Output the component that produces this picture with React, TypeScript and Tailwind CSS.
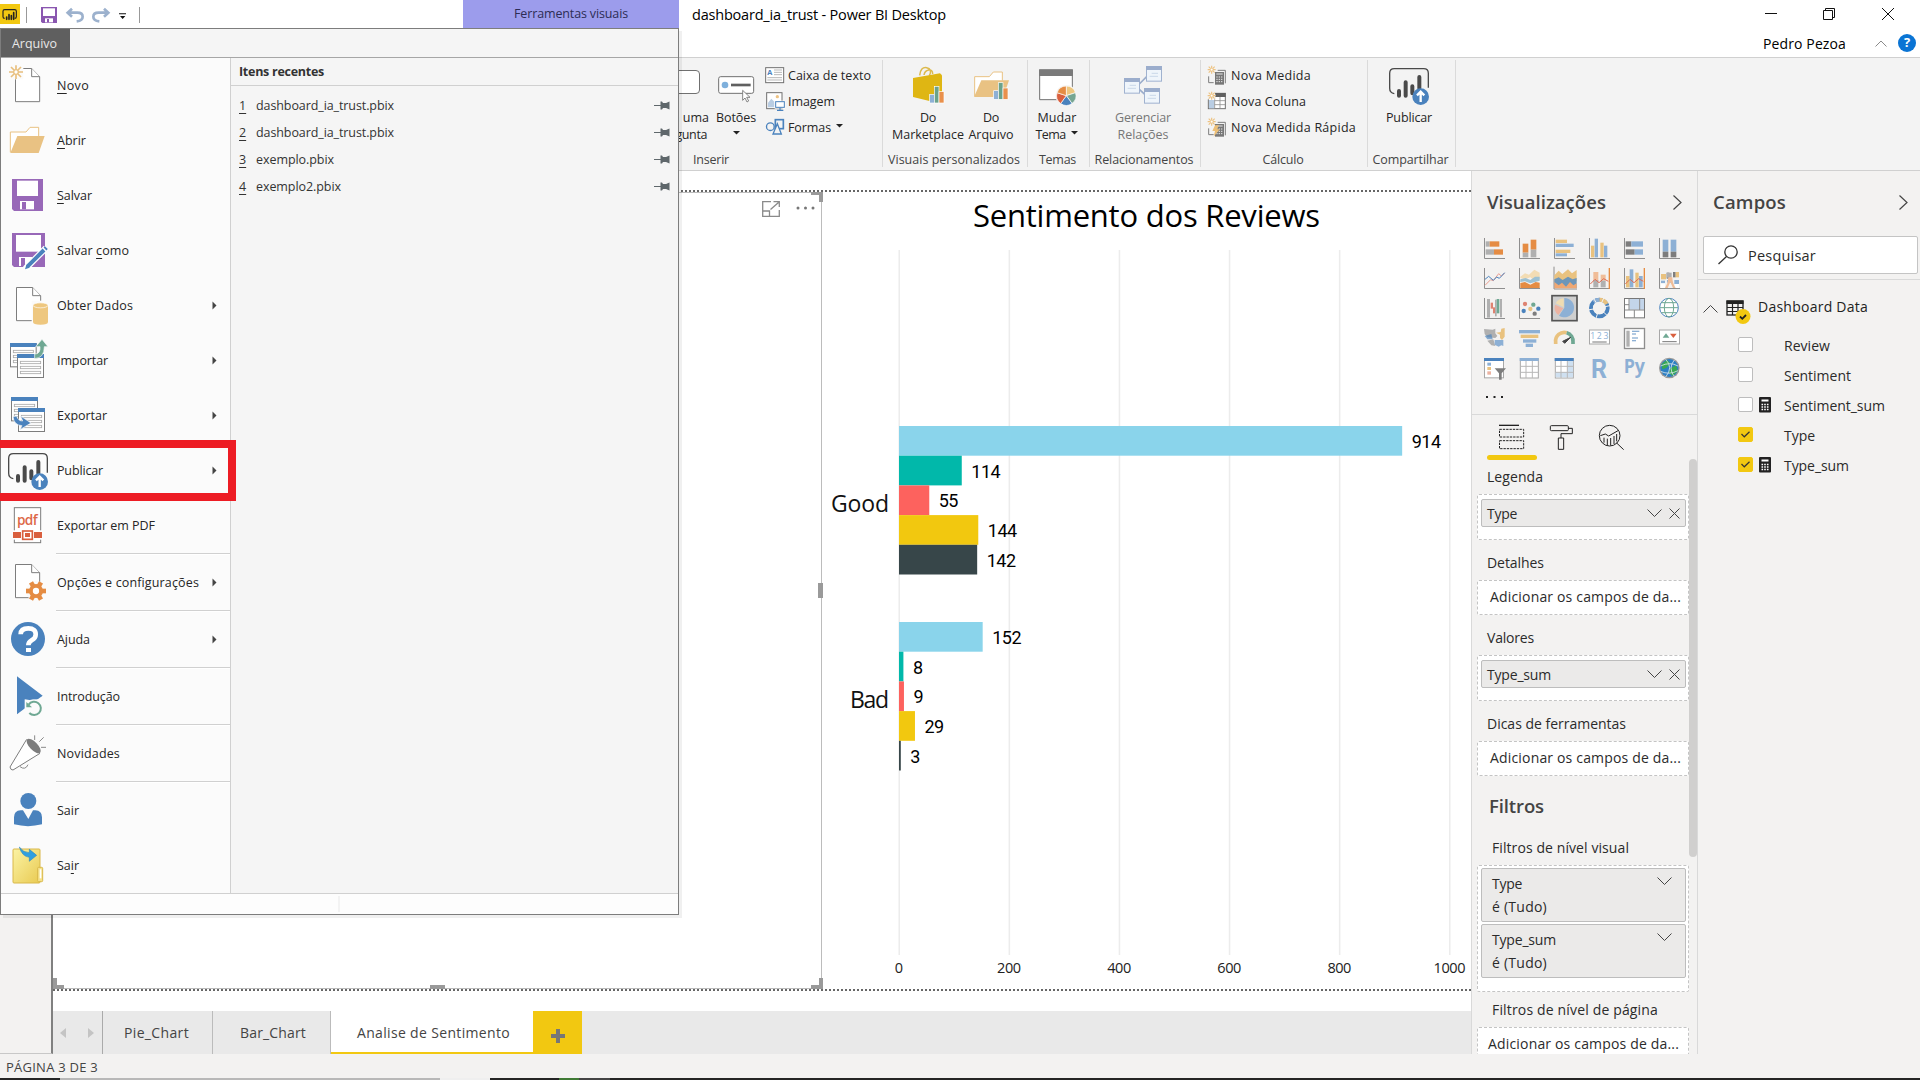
import React, { useLayoutEffect, useRef, useState } from "react";

type Kids = { children?: React.ReactNode };

/* Text run tracked so that it fills an exact width. */
function T({ w, className = "", children }: Kids & { w: number; className?: string }) {
  const ref = useRef<HTMLSpanElement>(null);
  const [ls, setLs] = useState<number | null>(null);
  useLayoutEffect(() => {
    const el = ref.current;
    if (!el || ls !== null) return;
    const n = (el.textContent || "").length;
    setLs((w - el.getBoundingClientRect().width) / n);
  }, [ls, w]);
  return (
    <span ref={ref} className={"inline-block whitespace-nowrap " + className} style={ls === null ? undefined : { letterSpacing: ls + "px" }}>
      {children}
    </span>
  );
}

const Page = ({ x, y }: { x: number; y: number }) => (
  <g transform={`translate(${x} ${y})`} fill="#fff" stroke="#7d7d7d" strokeWidth="3">
    <path d="M1.500 1.500H50L74 26V101H1.500Z" />
    <path d="M50 1.500V26H74" />
  </g>
);

const PublishArt = () => (
  <g>
    <path d="M40 596Q26 594 26 580V535Q26 521 40 521H128Q142 521 142 535V578" fill="none" stroke="#4a4a4a" strokeWidth="4" />
    <g stroke="#4a4a4a" strokeWidth="12" strokeLinecap="round">
      <path d="M54 588V602M74 562V602M94 574V595M115 546V580" />
    </g>
    <circle cx="119" cy="605" r="25" fill="#4a82bd" />
    <path d="M119 621V592M108 601L119 590L130 601" fill="none" stroke="#fff" strokeWidth="7" />
  </g>
);

const Windowed = ({ x, y, hw, hh }: { x: number; y: number; hw: number; hh: number }) => (
  <g transform={`translate(${x} ${y})`}>
    <rect x="1.500" y="1.500" width={hw - 3} height={hh - 3} fill="#fff" stroke="#7d7d7d" strokeWidth="3" />
    <rect width={hw} height="12" fill="#4a82bd" />
    <g fill="none" stroke="#aaa" strokeWidth="2.500">
      <rect x="10" y="22" width={hw - 20} height="7" />
      <rect x="10" y="37" width={hw - 20} height="7" />
      <rect x="10" y="52" width={hw - 20} height="7" />
    </g>
  </g>
);

const MenuIcon = ({ vy, children }: Kids & { vy: number }) => (
  <svg className="h-[55px] w-14 shrink-0" viewBox={`3 ${vy} 168 165`}>{children}</svg>
);

function Item({ vy, w, label, art, arrow }: { vy: number; w: number; label: React.ReactNode; art: React.ReactNode; arrow?: boolean }) {
  return (
    <div className="flex h-[55px] items-center">
      <MenuIcon vy={vy}>{art}</MenuIcon>
      <T w={w} className="text-[12.500px] leading-[18px] text-[#262626]">{label}</T>
      {arrow && (
        <svg className="mr-[13px] ml-auto h-[9px] w-[5px]" viewBox="0 0 5 9"><path d="M0.500 0.500L4.500 4.500L0.500 8.500Z" fill="#444" /></svg>
      )}
    </div>
  );
}

const Rule = () => <div className="ml-[55px] h-[2px] border-t border-[#d0d0d0] bg-white" />;

const U = ({ children }: Kids) => <span className="underline underline-offset-[3px]">{children}</span>;

const Gear = () => (
  <g transform="translate(108 933)">
    <g fill="#e58c43">
      {[0, 60, 120].map((a) => <rect key={a} x="-7" y="-30" width="14" height="60" transform={`rotate(${a + 30})`} />)}
      <circle r="21" />
    </g>
    <circle r="9.500" fill="#fff" />
  </g>
);

function FileMenu() {
  return (
    <div className="absolute top-7 left-0 flex h-[887px] w-[679px] flex-col border border-[#7d7d7d] bg-[#f5f5f5] shadow-[3px_3px_0_rgba(0,0,0,0.06)]">
      <div className="flex h-[29px] shrink-0 border-b border-[#a6a6a6]">
        <div className="flex w-[69px] items-center bg-[#5f5f5f] pl-[11px]">
          <T w={45} className="mt-[2px] text-[12.500px] text-[#e8e8e8]">Arquivo</T>
        </div>
      </div>
      <div className="flex h-[835px] shrink-0">
        <div className="w-[230px] border-r border-[#d0d0d0] bg-[#fbfbfb]">
          <Item vy={174} w={32} label={<><U>N</U>ovo</>} art={<>
            <Page x={45} y={204} />
            <rect x="26" y="196" width="44" height="42" fill="#fbfbfb" />
            <g stroke="#e8bf7d" strokeWidth="5"><path d="M48 196V208M48 224V237M27 216H40M56 216H69M33 201L42 210M54 222L63 231M63 201L54 210M42 222L33 231" /></g>
            <circle cx="48" cy="216" r="7" fill="#fff" stroke="#e8bf7d" strokeWidth="4" />
          </>} />
          <Item vy={339} w={29} label={<><U>A</U>brir</>} art={<>
            <path d="M31 457V396H78L90 382H116V408" fill="#fff" stroke="#e9c283" strokeWidth="3" />
            <path d="M31 459L52 408H134L116 459Z" fill="#e9c283" />
          </>} />
          <Item vy={504} w={35} label={<><U>S</U>alvar</>} art={<>
            <path d="M36 537H129V633H42L36 627Z" fill="#9868b8" />
            <rect x="51" y="542" width="63" height="46" fill="#fff" /><rect x="60" y="603" width="42" height="25" fill="#fff" /><rect x="66" y="606" width="12" height="22" fill="#9868b8" />
          </>} />
          <Item vy={669} w={72} label={<>Salvar <U>c</U>omo</>} art={<>
            <path d="M36 699H135V801H42L36 795Z" fill="#9868b8" />
            <rect x="48" y="705" width="75" height="50" fill="#fff" /><rect x="57" y="771" width="40" height="27" fill="#fff" /><rect x="63" y="774" width="12" height="24" fill="#9868b8" />
            <path d="M76 806L138 744" stroke="#fff" strokeWidth="19" /><path d="M82 800L132 750M135 747L139 743" stroke="#4a82bd" strokeWidth="12" /><path d="M75 808L79 794L89 803Z" fill="#4a82bd" />
          </>} />
          <Item vy={-6} w={76} arrow label="Obter Dados" art={<>
            <Page x={48} y={21} />
            <rect x="95" y="62" width="54" height="76" fill="#fbfbfb" />
            <path d="M99 76V126Q99 134 121.500 134T144 126V76Z" fill="#eec77f" /><ellipse cx="121.500" cy="76" rx="22.500" ry="7.500" fill="#eec77f" stroke="#fff" strokeWidth="2" />
          </>} />
          <Item vy={159} w={51} arrow label="Importar" art={<>
            <Windowed x={30} y={189} hw={80} hh={73} /><Windowed x={51} y={222} hw={81} hh={72} />
            <path d="M104 231V236Q133 234 133 200H144L126 178L107 200H120Q122 222 104 222Z" fill="#6fa893" stroke="#fbfbfb" strokeWidth="2" />
          </>} />
          <Item vy={324} w={50} arrow label="Exportar" art={<>
            <Windowed x={33} y={351} hw={81} hh={73} /><Windowed x={54} y={384} hw={81} hh={72} />
            <path d="M39 410Q42 436 66 437L60 449L93 429L62 408L68 423Q54 423 50 408Z" fill="#4a82bd" stroke="#fbfbfb" strokeWidth="2" />
          </>} />
          <Item vy={489} w={46} arrow label="Publicar" art={<PublishArt />} />
          <Item vy={654} w={98} label="Exportar em PDF" art={<>
            <rect x="43" y="683" width="79" height="105" fill="#fff" stroke="#7d7d7d" strokeWidth="3" />
            <text x="51" y="736" fontSize="41" textLength="62" fill="#dd6848" fontFamily="Open Sans, sans-serif" fontWeight="600">pdf</text>
            <rect x="39" y="751" width="88" height="28" fill="#fff" /><rect x="39" y="756" width="24" height="18" fill="#d95f3e" /><rect x="102" y="756" width="24" height="18" fill="#d95f3e" />
            <rect x="68" y="753" width="29" height="25" fill="#fff" stroke="#d95f3e" strokeWidth="5" /><rect x="75" y="759" width="15" height="12" fill="#d95f3e" />
          </>} />
          <Rule />
          <Item vy={825} w={142} arrow label="Opções e configurações" art={<><Page x={45} y={852} /><circle cx="108" cy="933" r="30" fill="#fbfbfb" /><Gear /></>} />
          <Rule />
          <Item vy={96} w={33} arrow label="Ajuda" art={<>
            <circle cx="84" cy="177" r="51" fill="#4a82bd" /><path d="M62 163Q62 145 85 145T107 164Q107 174 95 181Q85 187 85 196" fill="none" stroke="#fff" strokeWidth="14" /><rect x="78" y="204" width="15" height="12" fill="#fff" />
          </>} />
          <Rule />
          <Item vy={267} w={63} label="Introdução" art={<>
            <path d="M51 289L128 347L76 384L51 403Z" fill="#4a82bd" /><path d="M74 408V358H128V408Z" fill="#fbfbfb" /><path d="M76 360L128 347L90 360Z" fill="#4a82bd" />
            <path d="M86 374A20 20 0 1 1 88 399" fill="none" stroke="#6fa893" strokeWidth="6" /><path d="M79 366V382H96Z" fill="#6fa893" />
          </>} />
          <Rule />
          <Item vy={438} w={63} label="Novidades" art={<>
            <path d="M80 478L30 561Q32 571 39 570L120 520" fill="#fff" stroke="#7d7d7d" strokeWidth="3" /><ellipse cx="101" cy="498" rx="28" ry="12" transform="rotate(46 101 498)" fill="#7d7d7d" />
            <path d="M104 466V480M131 472L118 485M123 502H138M60 560Q76 572 84 554" fill="none" stroke="#8a8a8a" strokeWidth="3" />
          </>} />
          <Rule />
          <Item vy={609} w={22} label="Sair" art={<>
            <circle cx="85" cy="663" r="24" fill="#4a82bd" /><path d="M42 733V712Q42 692 62 691H69L85 717L99 691H106Q126 692 126 712V733Q84 744 42 733Z" fill="#4a82bd" />
          </>} />
          <Item vy={774} w={22} label={<>Sa<U>i</U>r</>} art={<>
            <defs><linearGradient id="fold" x2="1" y2="1"><stop stopColor="#fbf3a4" /><stop offset="1" stopColor="#e9ca52" /></linearGradient></defs>
            <rect x="39" y="807" width="81" height="102" rx="3" fill="url(#fold)" stroke="#d9b84a" strokeWidth="3" /><rect x="113" y="862" width="15" height="43" rx="3" fill="#f5e28a" stroke="#d9b84a" strokeWidth="3" /><rect x="119" y="868" width="5" height="27" fill="#fff" />
            <path d="M58 801Q66 830 88 832V844L110 826L88 808V818Q70 818 58 801Z" fill="#2f9fe0" stroke="#1c7ab8" strokeWidth="1.500" />
          </>} />
        </div>
        <div className="flex-1 bg-[#f5f5f5]">
          <div className="flex h-7 items-center border-b border-[#d0d0d0] pl-2">
            <T w={85} className="mt-[2px] text-[12.500px] font-bold text-[#333]">Itens recentes</T>
          </div>
          <div className="pt-[6px]">
            {[["dashboard_ia_trust.pbix", 138], ["dashboard_ia_trust.pbix", 138], ["exemplo.pbix", 78], ["exemplo2.pbix", 85]].map(([n, w], i) => (
              <div key={i} className="flex h-[27px] items-center pl-2 text-[12.500px] text-[#333]">
                <div className="mt-[2px] w-[17px]"><U>{i + 1}</U></div>
                <T w={w as number} className="mt-[2px]">{n}</T>
                <svg className="mr-2 ml-auto h-[9px] w-4" viewBox="0 0 16 9"><path d="M0 4H7V5H0ZM6.500 0.500H8L9 2H12L15.500 0.500V8.500L12 7H9L8 8.500H6.500Z" fill="#5f676b" /></svg>
              </div>
            ))}
          </div>
        </div>
      </div>
      <div className="flex flex-1 border-t border-[#d0d0d0] bg-[#fdfdfd]">
        <div className="my-[2px] ml-[337px] w-[2px] bg-[#f3f3f3]" />
      </div>
      <div className="absolute top-[411px] -left-px h-[61px] w-[236px] border-y-8 border-r-8 border-[#ed1c24]" />
    </div>
  );
}

const Group = ({ className, pad, label, w, children }: Kids & { className: string; pad: string; label: string; w: number }) => (
  <div className={"relative flex shrink-0 flex-col pt-1 " + className}>
    <div className={"flex " + pad}>{children}</div>
    <div className="mt-auto mb-px flex h-[17px] items-center justify-center pr-[3px] text-[12.500px] text-[#444]"><T w={w}>{label}</T></div>
    <div className="absolute top-[2px] right-0 h-[107px] w-px bg-[#dadada]" />
  </div>
);

const Big = ({ className, x, w = 126, art, children }: Kids & { className: string; x: number; w?: number; art: React.ReactNode }) => (
  <div className={"flex shrink-0 flex-col items-center text-[12.500px] leading-[17px] text-[#262626] " + className}>
    <svg className="mb-px h-[46px]" width={w / 3} viewBox={`${x} 36 ${w} 138`}>{art}</svg>
    {children}
  </div>
);

const Small = ({ x, y, w, label, art, caret }: { x: number; y: number; w: number; label: string; art: React.ReactNode; caret?: boolean }) => (
  <div className="flex h-[26px] items-center text-[12.500px] text-[#262626]">
    <svg className="mr-[2px] h-[26px] w-[22px]" viewBox={`${x} ${y} 66 78`}>{art}</svg>
    <T w={w} className="mt-[2px]">{label}</T>
    {caret && <Caret className="ml-[5px] -mt-[3px]" />}
  </div>
);

const Caret = ({ className = "" }: { className?: string }) => (
  <svg className={"h-[4px] w-[7px] " + className} viewBox="0 0 7 4"><path d="M0 0H7L3.500 3.500Z" fill="#222" /></svg>
);

const Bars3 = ({ x, y }: { x: number; y: number }) => (
  <g transform={`translate(${x} ${y})`} stroke="#fff" strokeWidth="2">
    <rect x="0" y="24" width="14" height="26" fill="#8db0d5" /><rect x="14" y="0" width="14" height="50" fill="#6ba28b" /><rect x="28" y="16" width="15" height="34" fill="#e9904c" />
  </g>
);

const Spark = ({ y }: { y: number }) => (
  <g stroke="#edc384" strokeWidth="3.500" fill="none"><path d={`M398 ${y - 12}V${y + 12}M386 ${y}H410M389 ${y - 9}L407 ${y + 9}M407 ${y - 9}L389 ${y + 9}`} /><circle cx="398" cy={y} r="4" fill="#fff" strokeWidth="2" /></g>
);

const Calc = ({ y }: { y: number }) => (
  <g><path d={`M389 ${y + 19}V${y + 38}H404M416 ${y + 1}H439V${y + 40}`} fill="none" stroke="#7d7d7d" strokeWidth="3" /><rect x="408" y={y + 6} width="27" height="38" fill="#777" />
    <g stroke="#fff" strokeWidth="2.500"><path d={`M412 ${y + 12}H431`} /><path d={`M412 ${y + 21}H431M412 ${y + 28}H431M412 ${y + 35}H431`} strokeDasharray="4 3" /></g></g>
);

const Rel = ({ x, y }: { x: number; y: number }) => (
  <g transform={`translate(${x} ${y})`}><rect x="1.500" y="1.500" width="45" height="44" fill="#eff5fb" stroke="#a0b2cf" strokeWidth="3" /><rect width="48" height="12" fill="#9badcc" /><path d="M17 22H36M11 31H36" stroke="#c3d3e6" strokeWidth="2.500" /></g>
);

const wedge = (i: number) => {
  const a = ((i * 72 - 90) * Math.PI) / 180, b = (((i + 1) * 72 - 90) * Math.PI) / 180;
  return `M1192 137L${1192 + 29 * Math.cos(a)} ${137 + 29 * Math.sin(a)}A29 29 0 0 1 ${1192 + 29 * Math.cos(b)} ${137 + 29 * Math.sin(b)}Z`;
};

function Ribbon() {
  return (
    <div className="flex h-[114px] shrink-0 border-y border-[#d0d0d0] bg-[#f3f3f3] pl-[640px]">
      <div className="relative flex w-[243px] shrink-0 flex-col pt-1">
        <div className="flex">
          <div className="flex w-[69px] flex-col items-end text-[12.500px] leading-[17px] text-[#262626]">
            <div className="mt-2 mr-[9px] mb-[15px] h-6 w-12 rounded border border-[#707070] bg-white" />
            <T w={56}>Faça uma</T>
            <T w={50} className="mr-[2px]">Pergunta</T>
          </div>
          <Big className="ml-[5px] w-[44px]" x={138} art={<>
            <rect x="149" y="80" width="105" height="50" rx="6" fill="#fff" stroke="#707070" strokeWidth="3" /><circle cx="168" cy="105" r="10" fill="#7fb0dc" /><path d="M186 105H245" stroke="#606060" strokeWidth="8" />
            <path d="M221 121V151L228 144L234 156L239 153L233 142H243Z" fill="#fff" stroke="#707070" strokeWidth="2.500" />
          </>}><T w={40}>Botões</T><Caret className="mt-[5px]" /></Big>
          <div className="ml-[6px]">
            <Small x={282} y={36} w={83} label="Caixa de texto" art={<>
              <rect x="287" y="53" width="54" height="45" fill="#fff" stroke="#707070" strokeWidth="3" /><text x="292" y="76" fontSize="22" fontWeight="700" fill="#4a82bd" fontFamily="Open Sans, sans-serif">A</text><path d="M312 60H336M312 67H336M312 74H336M292 83H336M292 90H336" stroke="#aaa" strokeWidth="2.500" />
            </>} />
            <Small x={282} y={114} w={47} label="Imagem" art={<>
              <rect x="290" y="128" width="46" height="48" fill="#fff" stroke="#707070" strokeWidth="3" /><path d="M294 172V158L304 146L313 155V172Z" fill="#b9cde3" /><circle cx="322" cy="140" r="5" fill="#eec384" />
              <path d="M314 152H346V176H314Z" fill="#fff" /><rect x="317" y="155" width="26" height="17" fill="#fff" stroke="#4a82bd" strokeWidth="3" /><path d="M330 173V181M321 181H340" stroke="#4a82bd" strokeWidth="3.500" />
            </>} />
            <Small x={282} y={192} w={43} caret label="Formas" art={<g fill="#f3f3f3" stroke="#4a82bd" strokeWidth="4">
              <rect x="316" y="209" width="24" height="27" strokeWidth="5" /><circle cx="301" cy="230" r="11.500" /><path d="M322 221L334 252H309Z" />
            </g>} />
          </div>
        </div>
        <div className="mt-auto mb-px ml-[53px] flex h-[17px] items-center text-[12.500px] text-[#444]"><T w={36}>Inserir</T></div>
        <div className="absolute top-[2px] right-0 h-[107px] w-px bg-[#dadada]" />
      </div>
      <Group className="w-[145px]" pad="pl-[6px]" label="Visuais personalizados" w={132}>
        <Big className="w-[78px]" x={714} w={120} art={<>
          <path d="M749 76Q752 50 770 53T778 77M762 75Q764 62 776 60T788 72" fill="none" stroke="#dcb94c" strokeWidth="4.500" /><path d="M729 84L810 70L816 76V152L800 158L729 141Z" fill="#dfb613" /><Bars3 x={779} y={109} />
        </>}><T w={16}>Do</T><T w={72}>Marketplace</T></Big>
        <Big className="w-[48px]" x={903} w={120} art={<>
          <path d="M914 138V80H958L970 66H997V92" fill="#fff" stroke="#e9c283" strokeWidth="3" /><path d="M912 141L934 91H1017L1000 141Z" fill="#e9c283" /><Bars3 x={971} y={98} />
        </>}><T w={16}>Do</T><T w={45}>Arquivo</T></Big>
      </Group>
      <Group className="w-[62px]" pad="pl-2" label="Temas" w={37}>
        <Big className="w-[42px]" x={1101} art={<>
          <path d="M1112 60H1210V149H1112Z" fill="#fff" stroke="#707070" strokeWidth="3" /><rect x="1110" y="58" width="102" height="20" fill="#7a7a7a" /><circle cx="1192" cy="137" r="32" fill="#f3f3f3" />
          <g stroke="#fff" strokeWidth="2"><path d={wedge(0)} fill="#eec77f" /><path d={wedge(1)} fill="#76a692" /><path d={wedge(2)} fill="#4a82bd" /><path d={wedge(3)} fill="#d95f3e" /><path d={wedge(4)} fill="#e58c43" /></g>
        </>}><T w={39}>Mudar</T><div className="flex items-center pr-px"><T w={30}>Tema</T><Caret className="-mt-1 ml-[5px]" /></div></Big>
      </Group>
      <Group className="w-[111px]" pad="pl-[32px]" label="Relacionamentos" w={99}>
        <Big className="w-[42px]" x={126} art={<>
          <path d="M178 102L200 80M178 118L195 134" stroke="#9badcc" strokeWidth="5" /><Rel x={132} y={84} /><Rel x={198} y={48} /><Rel x={192} y={114} />
        </>}><T w={56} className="text-[#777]">Gerenciar</T><T w={51} className="text-[#777]">Relações</T></Big>
      </Group>
      <Group className="w-[167px]" pad="pl-[6px]" label="Cálculo" w={41}>
        <div>
          <Small x={384} y={36} w={80} label="Nova Medida" art={<><Calc y={60} /><Spark y={59} /></>} />
          <Small x={384} y={114} w={75} label="Nova Coluna" art={<>
            <rect x="388" y="130" width="51" height="46" fill="#fff" stroke="#707070" strokeWidth="3" /><rect x="409" y="129" width="31" height="12" fill="#606060" /><rect x="390" y="150" width="16" height="25" fill="#b9cde3" /><path d="M407 141V176M423 141V176M407 152H438M407 164H438" stroke="#909090" strokeWidth="2.500" /><rect x="384" y="124" width="24" height="24" fill="#f3f3f3" /><Spark y={137} />
          </>} />
          <Small x={384} y={192} w={125} label="Nova Medida Rápida" art={<><Calc y={216} /><Spark y={215} /><path d="M408 226H420L414 238H422L404 260L408 243H400Z" fill="#edbf76" /></>} />
        </div>
      </Group>
      <Group className="w-[88px]" pad="pl-5" label="Compartilhar" w={76}>
        <Big className="w-[42px]" x={924} art={<g transform="translate(903 -465)"><PublishArt /></g>}><T w={46}>Publicar</T></Big>
      </Group>
    </div>
  );
}

function TitleBar() {
  return (
    <>
      <div className="flex h-7 shrink-0 items-center bg-white">
        <svg className="h-7 w-[463px] shrink-0" viewBox="0 0 1389 84">
          <rect x="0" y="12" width="60" height="60" fill="#f2c811" />
          <path d="M14 55Q9 55 9 50V34Q9 29 14 29H44Q49 29 49 34V50Q49 55 44 55" fill="none" stroke="#222" strokeWidth="3.500" />
          <path d="M20 51V58M27 44V58M34 47V58M41 38V58" stroke="#222" strokeWidth="5" strokeLinecap="round" />
          <path d="M79.500 21V69M418.500 21V69" stroke="#999" strokeWidth="3" />
          <path d="M123 21H171V69H127L123 65Z" fill="#8a57b0" /><rect x="129" y="25" width="36" height="23" fill="#fff" /><rect x="135" y="55" width="24" height="12" fill="#fff" /><rect x="141" y="57" width="6" height="10" fill="#8a57b0" />
          <path d="M203 38H232Q248 38 248 50T230 64M216 26L203 38L216 50" fill="none" stroke="#9cb1cd" strokeWidth="8" />
          <path d="M325 38H296Q280 38 280 50T298 64M312 26L325 38L312 50" fill="none" stroke="#9cb1cd" strokeWidth="8" />
          <path d="M357 40H378V43H357ZM360 48H376L368 57Z" fill="#111" />
        </svg>
        <div className="flex h-7 w-[216px] shrink-0 justify-center bg-[#9c9cec] pt-[5px] text-[12.500px] leading-[17px] text-[#2d2d55]"><T w={114}>Ferramentas visuais</T></div>
        <T w={254} className="mt-[2px] ml-[13px] text-[14.500px] text-black">dashboard_ia_trust - Power BI Desktop</T>
        <svg className="ml-auto h-7 w-[160px]" viewBox="1760 0 160 28" fill="none" stroke="#111" strokeWidth="1">
          <path d="M1765 13.500H1777M1823.500 10.500H1832.500V19.500H1823.500ZM1825.500 10.500V8.500H1834.500V17.500H1832.500M1882 8L1894 20M1894 8L1882 20" />
        </svg>
      </div>
      <div className="flex h-[29px] shrink-0 items-center justify-end bg-white">
        <T w={83} className="mr-[29px] mt-[2px] text-[14px] leading-5 text-black">Pedro Pezoa</T>
        <svg className="mt-[1px] h-[7px] w-3" viewBox="0 0 12 7"><path d="M0.500 6.500L6 1L11.500 6.500" fill="none" stroke="#8a8a8a" /></svg>
        <div className="mr-[4px] ml-[11px] flex size-[18px] items-center justify-center rounded-full bg-[#0a74d4] text-[13px] font-bold text-white">?</div>
      </div>
    </>
  );
}

const COLORS = ["#8ad4eb", "#01b8aa", "#fd625e", "#f2c80f", "#374649"];
const DATA = [
  { name: "Good", y: 426, ly: 512, w: 58, v: [914, 114, 55, 144, 142] },
  { name: "Bad", y: 622, ly: 708, w: 39, v: [152, 8, 9, 29, 3] },
];

function BarChart() {
  return (
    <svg className="h-[796px] w-[649px]" viewBox="822 192 649 796" fontFamily="Open Sans, sans-serif">
      <text x="973" y="227" fontSize="31" textLength="347">Sentimento dos Reviews</text>
      {[0, 200, 400, 600, 800, 1000].map((t) => (
        <g key={t}>
          <rect x={898.5 + t * 0.5505} y="250" width="1.500" height="705" fill="#ececec" />
          <text x={899 + t * 0.5505} y="973" fontSize="14.500" textAnchor="middle" fill="#222" textLength={String(t).length * 8}>{t}</text>
        </g>
      ))}
      {DATA.map((g) => (
        <g key={g.name}>
          <text x={889 - g.w} y={g.ly} fontSize="23" textLength={g.w} fill="#111">{g.name}</text>
          {g.v.map((v, i) => (
            <g key={i}>
              <rect x="899" y={g.y + i * 29.7} width={Math.max(v * 0.5505, 1.8)} height="29.700" fill={COLORS[i]} />
              <text x={908.5 + v * 0.5505} y={g.y + i * 29.7 + 22} fontSize="18" fontFamily="Roboto, sans-serif" textLength={String(v).length * 9.8}>{v}</text>
            </g>
          ))}
        </g>
      ))}
    </svg>
  );
}

const Dots = () => <div className="h-[2px] w-[1418px] shrink-0 bg-[repeating-linear-gradient(90deg,#666_0_2px,transparent_2px_4px)]" />;

function Canvas() {
  return (
    <div className="flex h-[840px] shrink-0 flex-col bg-white pt-[19px]">
      <Dots />
      <div className="flex h-[797px]">
        <div className="relative h-[797px] w-[769px] shrink-0 border-y border-r border-[#bcbcbc]">
          <svg className="absolute top-2 left-[709px] h-4 w-[54px]" viewBox="0 0 54 16" fill="none" stroke="#8a8a8a" strokeWidth="1.300">
            <path d="M9 0.700H0.700V15.300H17.300V9M0.700 10H7.500V15M8.500 8.500L16.500 1.500M11.500 0.700H17.300V6" />
            <g fill="#777" stroke="none"><circle cx="36" cy="7" r="1.500" /><circle cx="43.500" cy="7" r="1.500" /><circle cx="51" cy="7" r="1.500" /></g>
          </svg>
          <div className="absolute -top-px -right-[2px] h-[10px] w-3 border-t-[3px] border-r-4 border-[#9a9a9a]" />
          <div className="absolute top-[390px] -right-[2px] h-[15px] w-[5px] bg-[#9a9a9a]" />
          <div className="absolute -right-[2px] -bottom-px h-[11px] w-3 border-r-4 border-b-4 border-[#9a9a9a]" />
          <div className="absolute -bottom-px left-[377px] h-1 w-[15px] bg-[#9a9a9a]" />
          <div className="absolute -bottom-px left-0 h-[11px] w-[11px] border-b-4 border-l-4 border-[#9a9a9a]" />
        </div>
        <BarChart />
      </div>
      <Dots />
    </div>
  );
}

function PageTabs() {
  return (
    <div className="flex h-[43px] shrink-0 bg-[#e9e9e9] text-[14px] text-[#444]">
      <div className="flex w-[50px] items-center gap-[22px] border-r border-[#aaa] pl-[7px]">
        <svg className="h-[10px] w-[6px]" viewBox="0 0 6 10"><path d="M6 0V10L0 5Z" fill="#c4c4c4" /></svg>
        <svg className="h-[10px] w-[6px]" viewBox="0 0 6 10"><path d="M0 0V10L6 5Z" fill="#c4c4c4" /></svg>
      </div>
      <div className="flex w-[110px] items-center border-r border-[#bbb] pl-[21px]"><T w={65}>Pie_Chart</T></div>
      <div className="flex w-[118px] items-center border-r border-[#bbb] pl-[27px]"><T w={66}>Bar_Chart</T></div>
      <div className="flex w-[202px] items-center border-b-2 border-[#f2c811] bg-white pl-[26px]"><T w={153} className="mt-[2px]">Analise de Sentimento</T></div>
      <div className="flex w-[49px] items-center justify-center bg-[#f2c811] pt-[7px]">
        <svg className="size-[14px]" viewBox="0 0 14 14"><path d="M7 0V14M0 7H14" stroke="#777" strokeWidth="4" /></svg>
      </div>
    </div>
  );
}

const Ax = () => <path d="M1.500 0V61.500H63" fill="none" stroke="#8e8e8e" strokeWidth="3" />;
type B = [number, number, number, number, string];
const R = ({ b }: { b: B[] }) => <>{b.map(([x, y, w, h, f], i) => <rect key={i} x={x} y={y} width={w} height={h} fill={f} />)}</>;
const OR = "#e58c43", GR = "#b0b0b0", BL = "#8db0d5", YL = "#e9c27f", DG = "#7d7d7d", DB = "#4a82bd", GN = "#6fa893", RD = "#de8371";

const VIZ: React.ReactNode[] = [
  <><Ax /><R b={[[5, 10, 12, 16, GR], [17, 10, 29, 16, OR], [5, 34, 25, 16, GR], [30, 34, 27, 16, OR]]} /></>,
  <><Ax /><R b={[[11, 17, 17, 27, OR], [11, 44, 17, 14, GR], [35, 5, 17, 30, OR], [35, 35, 17, 23, GR]]} /></>,
  <><Ax /><R b={[[5, 5, 34, 10, YL], [5, 17, 54, 10, BL], [5, 35, 44, 10, YL], [5, 46, 34, 9, BL]]} /></>,
  <><Ax /><R b={[[6, 23, 10, 35, YL], [17, 2, 10, 56, BL], [34, 14, 10, 44, YL], [45, 23, 10, 35, BL]]} /></>,
  <><Ax /><R b={[[5, 10, 17, 16, DG], [22, 10, 35, 16, BL], [5, 34, 27, 16, DG], [32, 34, 25, 16, BL]]} /></>,
  <><Ax /><R b={[[11, 5, 17, 36, BL], [11, 41, 17, 17, DG], [35, 5, 17, 36, BL], [35, 41, 17, 17, DG]]} /></>,
  <><Ax /><path d="M3 52L20 35L28 38L44 17L52 24L62 16" fill="none" stroke="#ec9d8e" strokeWidth="3" /><path d="M3 34L14 25L28 37L38 27L46 31L62 14" fill="none" stroke={DB} strokeWidth="3" /></>,
  <><Ax /><path d="M4 26L18 16L30 20L46 5L62 14V32L46 38L34 28L18 34L4 30Z" fill="#f2dcb4" /><path d="M4 34L20 30L34 36L48 26L62 26V38L48 42L34 46L18 40L4 42Z" fill="#9cc1d4" /><path d="M4 45L18 42L34 50L50 42L62 44V60H4Z" fill={OR} /></>,
  <><path d="M0 -4V63H69" fill="none" stroke="#8e8e8e" strokeWidth="3" /><path d="M1 22L14 8L25 18L42 4L54 16L68 6V40H1Z" fill={YL} /><path d="M1 34L14 28L26 36L42 26L56 34L68 30V60H1Z" fill="#6d96b9" /><path d="M1 42L14 52L24 44L36 56L48 42L58 52L68 46V61H1Z" fill="#f0a873" /></>,
  <><Ax /><R b={[[13, 12, 15, 30, "#f0bd98"], [13, 36, 15, 22, GR], [35, 20, 15, 18, "#f0bd98"], [35, 38, 15, 20, GR], [59, 0, 4, 63, OR]]} /><path d="M4 48L18 34L30 44L44 32L58 40" fill="none" stroke="#de6c55" strokeWidth="3" /></>,
  <><Ax /><R b={[[6, 24, 11, 34, YL], [17, 4, 11, 54, BL], [34, 14, 10, 44, YL], [45, 24, 11, 34, BL], [59, 0, 4, 63, OR]]} /><path d="M4 48L18 34L30 44L44 32L58 40" fill="none" stroke="#de6c55" strokeWidth="3" /></>,
  <><Ax /><R b={[[6, 18, 15, 16, YL], [23, 14, 8, 18, DG], [23, 14, 15, 15, GR], [42, 12, 8, 16, DG], [50, 12, 10, 16, YL], [6, 38, 12, 8, BL], [6, 46, 12, 14, "#fff"], [24, 36, 12, 8, BL], [46, 36, 14, 12, BL], [48, 48, 12, 12, "#fff"]]} /><path d="M18 60Q28 44 28 28L40 28Q40 46 50 60H42L34 42L26 60Z" fill="#f0bd98" /></>,
  <><Ax /><R b={[[9, 3, 9, 56, GR], [20, 14, 7, 18, RD], [27, 28, 8, 18, RD], [33, 5, 5, 50, GR], [38, 3, 8, 43, GN], [48, 3, 6, 55, GR]]} /></>,
  <><Ax />{([[18, 18, RD], [43, 20, GN], [14, 39, DB], [34, 33, YL], [58, 32, DB], [47, 47, DG]] as [number, number, string][]).map(([x, y, f]) => <circle key={x} cx={x} cy={y} r="6.500" fill={f} />)}</>,
  <><rect x="-6" y="-7" width="75" height="75" fill="#cfcfcf" stroke="#555" strokeWidth="5" /><path d="M31 29V0A29 29 0 1 1 15 53Z" fill={BL} /><path d="M29 28V1A29 29 0 0 0 5 16Z" fill="#efdcb2" /><path d="M28 31L3 20A29 29 0 0 0 13 51Z" fill="#ecb3a2" /></>,
  <><circle cx="31" cy="30" r="25" fill="none" stroke={DB} strokeWidth="12" /><path d="M31 5A25 25 0 0 1 53 18" fill="none" stroke={YL} strokeWidth="12" /><path d="M14 12A25 25 0 0 1 31 5" fill="none" stroke={BL} strokeWidth="12" /><path d="M31 30L12 -2M31 30L46 -4M31 30L66 22M31 30L58 56M31 30L20 64M31 30L-4 36" stroke="#f3f2f1" strokeWidth="3" /><circle cx="31" cy="30" r="19" fill="#f3f2f1" /></>,
  <><rect x="1.500" y="1.500" width="60" height="58" fill="#fff" stroke="#777" strokeWidth="3" /><rect x="16" y="3" width="30" height="32" fill="#c3d5ea" /><rect x="48" y="3" width="12" height="32" fill="#c3d5ea" /><path d="M15 2V36M2 20H15M2 36H61M31 36V60M47 2V36" stroke="#888" strokeWidth="3" /></>,
  <g fill="none" stroke={GN} strokeWidth="3"><circle cx="30" cy="29" r="28" fill="#fff" stroke={DB} /><ellipse cx="30" cy="29" rx="14" ry="28" /><path d="M3 29H57M7 14H53M7 44H53" /></g>,
  <><path d="M0 3L26 5L34 2V16L40 24L34 30L10 28L2 18Z" fill={GR} /><path d="M36 14L50 12L52 2L62 0V26L54 36L48 30V20Z" fill={YL} /><path d="M2 24L22 18L26 34L10 34Z" fill={DB} opacity=".65" /><path d="M10 38L28 34L34 54L22 52Z" fill={GR} /><path d="M32 36H58L58 54L52 52L44 56L32 50Z" fill={BL} /></>,
  <R b={[[0, 6, 63, 10, BL], [5, 20, 53, 10, YL], [12, 34, 40, 10, BL], [20, 47, 22, 10, BL]]} />,
  <><path d="M5 48V42A26 26 0 0 1 38 14" fill="none" stroke={YL} strokeWidth="11" /><path d="M38 14A26 26 0 0 1 57 42V48" fill="none" stroke={GN} strokeWidth="11" /><path d="M26 40L50 28L32 46Z" fill="#444" stroke="#444" strokeWidth="3" /></>,
  <><rect x="1.500" y="6" width="60" height="42" fill="#fff" stroke="#a8a8a8" strokeWidth="3" /><text x="4" y="34" fontSize="26" textLength="54" fill={BL} fontFamily="Open Sans, sans-serif">123</text><path d="M10 42H53" stroke="#777" strokeWidth="3" /></>,
  <><rect x="1.500" y="1.500" width="60" height="60" fill="#fff" stroke="#8e8e8e" strokeWidth="4" /><R b={[[7, 8, 10, 48, GR], [24, 8, 22, 4, BL], [24, 16, 12, 4, BL], [24, 28, 18, 4, BL], [24, 36, 12, 4, BL]]} /></>,
  <><rect x="1.500" y="6" width="60" height="42" fill="#fff" stroke="#a8a8a8" strokeWidth="3" /><path d="M11 29L21 16L31 29Z" fill={GN} /><path d="M33 17H53L43 30Z" fill="#d95f3e" /><path d="M10 41H53" stroke="#777" strokeWidth="3" /></>,
  <><rect x="1.500" y="1.500" width="57" height="58" fill="#fff" stroke="#a8a8a8" strokeWidth="3" /><R b={[[0, 0, 60, 9, DB], [10, 14, 11, 9, BL], [10, 27, 11, 9, YL], [10, 40, 11, 10, "#ecb3a2"]]} /><path d="M32 31H66L53 46V65H45V46Z" fill="#7d7d7d" /></>,
  <><rect x="4" y="2" width="54" height="58" fill="#fff" stroke="#a8a8a8" strokeWidth="3" /><rect x="2" y="0" width="57" height="9" fill={BL} /><path d="M21 9V60M40 9V60M4 25H58M4 43H58" stroke="#b8b8b8" strokeWidth="3" /></>,
  <><rect x="4" y="2" width="54" height="58" fill="#fff" stroke="#a8a8a8" strokeWidth="3" /><path d="M40 9H57V58H5V43H40Z" fill="#cfe0f0" /><rect x="2" y="0" width="57" height="9" fill={DB} /><path d="M21 9V60M40 9V60M4 25H58M4 43H58" stroke="#b8b8b8" strokeWidth="3" /></>,
  <text x="6" y="61" fontSize="80" textLength="48" fontWeight="700" lengthAdjust="spacingAndGlyphs" fill={BL} fontFamily="Roboto, sans-serif">R</text>,
  <text x="-1" y="45" fontSize="56" textLength="64" fontWeight="700" lengthAdjust="spacingAndGlyphs" fill={BL} fontFamily="Open Sans, sans-serif">Py</text>,
  <><circle cx="31" cy="30" r="31" fill="#999" /><circle cx="31" cy="30" r="27" fill="#2c7fc4" /><path d="M8 18L24 5L34 16L22 30L10 34ZM34 30L52 22L56 40L40 54L30 44Z" fill="#39a852" /><path d="M20 4Q44 28 20 57M46 6Q26 30 46 56M5 24Q32 10 57 24M5 40Q30 52 57 38" fill="none" stroke="#d8e4ea" strokeWidth="2.500" /></>,
];

const Chev = ({ className = "" }: { className?: string }) => (
  <svg className={"h-[8px] w-[15px] shrink-0 " + className} viewBox="0 0 15 8"><path d="M0.500 0.500L7.500 7.500L14.500 0.500" fill="none" stroke="#444" /></svg>
);
const ChevR = ({ className = "" }: { className?: string }) => (
  <svg className={"h-[15px] w-[9px] " + className} viewBox="0 0 9 15"><path d="M0.500 0.500L8 7.500L0.500 14.500" fill="none" stroke="#444" strokeWidth="1.200" /></svg>
);

const Well = ({ className = "", children }: Kids & { className?: string }) => (
  <div className={"ml-[5px] w-[212px] shrink-0 rounded-[2px] border border-dashed border-[#c4c4c4] bg-white " + className}>{children}</div>
);
const Lab = ({ w, className, children }: Kids & { w: number; className: string }) => (
  <div className={"flex shrink-0 items-center " + className}><T w={w}>{children}</T></div>
);
const Chip = ({ name, w }: { name: string; w: number }) => (
  <div className="mt-1 ml-[3px] flex h-7 w-[205px] items-center rounded-[2px] border border-[#bdbdbd] bg-[#ebeae9] pr-[5px] pl-[5px]">
    <T w={w}>{name}</T>
    <Chev className="mr-[7px] ml-auto" />
    <svg className="size-[11px]" viewBox="0 0 11 11"><path d="M0.500 0.500L10.500 10.500M10.500 0.500L0.500 10.500" stroke="#444" /></svg>
  </div>
);
const FilterChip = ({ name, w }: { name: string; w: number }) => (
  <div className="mt-[2px] ml-[3px] flex h-[54px] w-[205px] items-start justify-between rounded-[2px] border border-[#bdbdbd] bg-[#ebeae9] pt-[3px] pr-[13px] pl-[10px] leading-[23px]">
    <div className="flex flex-col items-start"><T w={w}>{name}</T><T w={55}>é (Tudo)</T></div>
    <Chev className="mt-[5px]" />
  </div>
);
const Placeholder = () => <T w={191} className="-mt-[2px]">Adicionar os campos de da...</T>;

function VizPane() {
  return (
    <div className="relative flex h-[883px] w-[226px] shrink-0 flex-col overflow-hidden border-l border-[#d9d9d9] bg-[#f3f2f1] text-[14px] text-[#2b2b2b]">
      <div className="flex h-[62px] shrink-0 items-center pr-[15px] pl-[15px]">
        <T w={119} className="text-[18.500px] font-semibold text-[#444]">Visualizações</T>
        <ChevR className="ml-auto" />
      </div>
      <div className="mt-[5px] ml-[12px] grid w-max shrink-0 grid-cols-6 gap-x-[14px] gap-y-[9px]">
        {VIZ.map((v, i) => <svg key={i} className="size-[21px] overflow-visible" viewBox="0 0 63 63">{v}</svg>)}
      </div>
      <svg className="mt-[16px] ml-[13px] h-[4px] w-5 shrink-0" viewBox="0 0 20 4"><path d="M1 1H3V3H1ZM8.500 1H10.500V3H8.500ZM16 1H18V3H16Z" fill="#222" /></svg>
      <div className="mt-[15px] h-px shrink-0 bg-[#d9d9d9]" />
      <svg className="h-[45px] w-[226px] shrink-0" viewBox="36 735 678 135" fill="none" stroke="#222" strokeWidth="3">
        <path d="M117 766H177" strokeWidth="4" /><path d="M118.500 778H191V801H118.500ZM118.500 812H191V836H118.500Z" strokeDasharray="7 3" />
        <rect x="271" y="767" width="54" height="15" rx="3" /><path d="M325 775H337V791H303V804M295 804H311V838H295Z" />
        <circle cx="449" cy="797" r="31" /><path d="M470 819L491 839M421 797L436 792L446 798L474 782M432 803V818M442 806V825M452 804V826M462 798V822M470 792V814" />
        <rect x="81" y="855" width="150" height="15" rx="7.500" fill="#f2c811" stroke="none" />
      </svg>
      <Lab w={56} className="h-[34px] pb-[2px] pl-[15px]">Legenda</Lab>
      <Well className="h-[46px]"><Chip name="Type" w={30} /></Well>
      <Lab w={57} className="h-[40px] pt-[4px] pl-[15px]">Detalhes</Lab>
      <Well className="flex h-[35px] items-center pl-[12px]"><Placeholder /></Well>
      <Lab w={47} className="h-[40px] pt-[4px] pl-[15px]">Valores</Lab>
      <Well className="h-[46px]"><Chip name="Type_sum" w={64} /></Well>
      <Lab w={139} className="h-[40px] pt-[4px] pl-[15px]">Dicas de ferramentas</Lab>
      <Well className="flex h-[35px] items-center pl-[12px]"><Placeholder /></Well>
      <Lab w={55} className="h-[60px] pl-[17px] text-[18.500px] font-semibold text-[#444]">Filtros</Lab>
      <Lab w={137} className="h-[29px] pb-[6px] pl-[20px]">Filtros de nível visual</Lab>
      <Well className="h-[127px]"><FilterChip name="Type" w={30} /><FilterChip name="Type_sum" w={64} /></Well>
      <Lab w={166} className="h-[35px] pl-[20px]">Filtros de nível de página</Lab>
      <Well className="flex h-[35px] items-center pl-[10px]"><Placeholder /></Well>
      <div className="absolute top-[288px] right-0 h-[398px] w-2 rounded-full bg-[#d0cfce]" />
    </div>
  );
}

const FIELDS: [string, number, boolean, boolean][] = [
  ["Review", 46, false, false], ["Sentiment", 67, false, false], ["Sentiment_sum", 101, false, true], ["Type", 31, true, false], ["Type_sum", 65, true, true],
];

function FieldsPane() {
  return (
    <div className="h-[883px] flex-1 border-l border-[#d9d9d9] bg-[#f3f2f1] text-[14px] text-[#2b2b2b]">
      <div className="flex h-[62px] items-center pr-[12px] pl-[15px]">
        <T w={73} className="text-[18.500px] font-semibold text-[#444]">Campos</T>
        <ChevR className="ml-auto" />
      </div>
      <div className="mt-[3px] ml-[5px] flex h-[38px] w-[215px] items-center rounded-[2px] border border-[#c4c4c4] bg-white pl-[14px]">
        <svg className="mr-[10px] size-5" viewBox="0 0 20 20" fill="none" stroke="#333" strokeWidth="1.300"><circle cx="13" cy="7" r="6.200" /><path d="M8.500 11.500L0.500 19" /></svg>
        <T w={68} className="mt-[2px] text-[14.500px]">Pesquisar</T>
      </div>
      <div className="mt-[5px] h-px bg-[#d9d9d9]" />
      <div className="mt-[10px] flex h-[36px] items-center pl-[5px]">
        <svg className="h-[36px] w-[55px] shrink-0" viewBox="0 0 55 36">
          <path d="M0.500 22.500L7.500 15.500L14.500 22.500" fill="none" stroke="#444" />
          <rect x="24" y="11" width="16" height="14" fill="#f3f2f1" stroke="#222" strokeWidth="1.300" /><rect x="23.500" y="10.500" width="17" height="3.500" fill="#222" /><path d="M29.500 13V25M35 13V25M24 17.500H40M24 21.500H40" stroke="#222" strokeWidth="1.200" />
          <circle cx="40" cy="26.500" r="7.500" fill="#f2c811" /><path d="M37 26.500L39.300 28.800L43 25" fill="none" stroke="#222" strokeWidth="1.800" />
        </svg>
        <T w={110} className="-mt-[3px] font-medium text-[#222]">Dashboard Data</T>
      </div>
      <div className="mt-[4px]">
        {FIELDS.map(([n, w, on, sum]) => (
          <div key={n} className="flex h-[30px] items-center pl-[40px]">
            <div className={"-mt-px flex size-[15px] items-center justify-center rounded-[2px] border " + (on ? "border-[#f2c811] bg-[#f2c811]" : "border-[#bdbdbd] bg-white")}>
              {on && <svg className="h-[7px] w-[9px]" viewBox="0 0 9 7"><path d="M0.500 3L3.300 5.800L8.500 0.700" fill="none" stroke="#333" strokeWidth="1.200" /></svg>}
            </div>
            <svg className="mr-[13px] ml-[6px] h-4 w-3" viewBox="0 0 12 16">
              {sum && <><rect width="12" height="15.500" rx="1" fill="#222" /><path d="M2.500 3.500H9.500" stroke="#fff" strokeWidth="2" /><path d="M2.500 7.500H9.500M2.500 10H9.500M2.500 12.500H9.500" stroke="#fff" strokeWidth="1.400" strokeDasharray="1.600 1.100" /></>}
            </svg>
            <T w={w}>{n}</T>
          </div>
        ))}
      </div>
    </div>
  );
}

export default function App() {
  return (
    <div className="relative flex h-[1080px] w-[1920px] flex-col overflow-hidden bg-[#f3f2f1] font-['Open_Sans',sans-serif]">
      <TitleBar />
      <Ribbon />
      <div className="flex h-[883px] shrink-0">
        <div className="w-[53px] shrink-0 border-r-2 border-r-[#808080] border-b border-b-[#c8c8c8] bg-[#f3f2f1]" />
        <div className="flex w-[1418px] shrink-0 flex-col">
          <Canvas />
          <PageTabs />
        </div>
        <VizPane />
        <FieldsPane />
      </div>
      <div className="flex h-6 shrink-0 items-center pt-[4px] pl-[6px] text-[13px] text-[#444]"><T w={92}>PÁGINA 3 DE 3</T></div>
      <div className="flex h-[2px] shrink-0 bg-[#252525]">
        <div className="ml-[60px] w-[380px] bg-[#b8b8b8]" />
        <div className="w-[50px] bg-[#efefef]" />
        <div className="ml-[69px] w-5 bg-[#3f7a35]" />
        <div className="w-[31px] bg-[#444]" />
      </div>
      <FileMenu />
    </div>
  );
}
